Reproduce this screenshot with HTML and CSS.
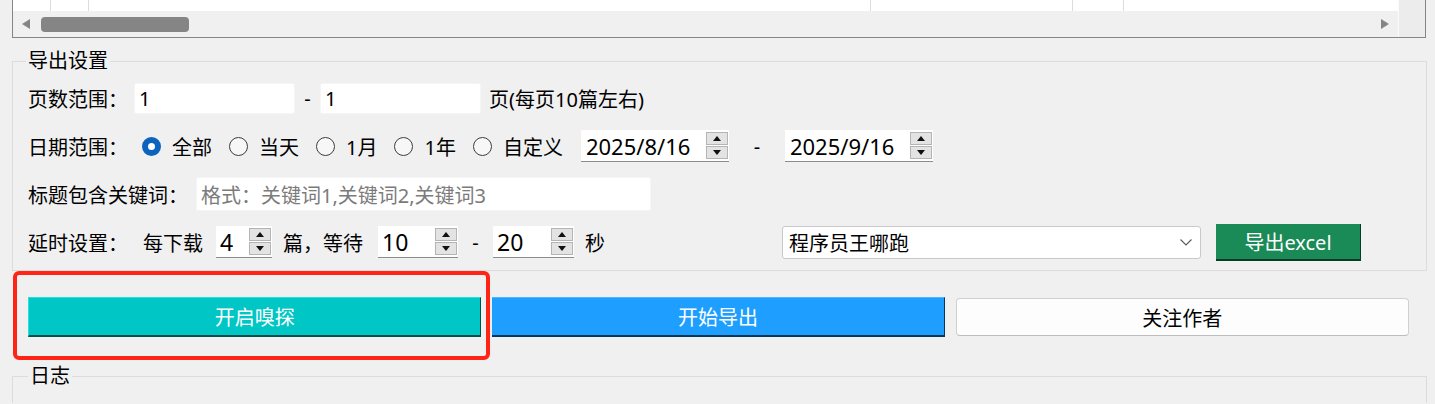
FILE: index.html
```html
<!DOCTYPE html>
<html lang="zh-CN">
<head>
<meta charset="utf-8">
<title>导出设置</title>
<link rel="stylesheet" href="styles.css">
</head>
<body>
<div class="grid-frame">
  <div class="grid-main">
    <div class="grid-row">
      <span class="cell c1"></span>
      <span class="cell c2"></span>
      <span class="cell c3"></span>
      <span class="cell c4"></span>
      <span class="cell c5"></span>
      <span class="cell c6"></span>
    </div>
    <div class="hscroll">
      <span class="arrow-left"></span>
      <span class="thumb"></span>
      <span class="arrow-right"></span>
    </div>
  </div>
  <div class="corner"></div>
</div>

<fieldset class="group export-group">
  <legend>导出设置</legend>
  <div class="row">
    <span class="label w-page">页数范围：</span>
    <div class="line-edit page-edit">1</div>
    <span class="dash dash-page">-</span>
    <div class="line-edit page-edit">1</div>
    <span class="after-page">页(每页10篇左右)</span>
  </div>
  <div class="row">
    <span class="label w-date">日期范围：</span>
    <label class="radio"><span class="dot checked"></span>全部</label>
    <label class="radio"><span class="dot"></span>当天</label>
    <label class="radio"><span class="dot"></span>1月</label>
    <label class="radio"><span class="dot"></span>1年</label>
    <label class="radio last"><span class="dot"></span>自定义</label>
    <div class="spin date-spin">
      <span class="spin-val date-val">2025/8/16</span>
      <span class="spin-btns"><span class="sb up"><i></i></span><span class="sb down"><i></i></span></span>
    </div>
    <span class="dash dash-date">-</span>
    <div class="spin date-spin">
      <span class="spin-val date-val">2025/9/16</span>
      <span class="spin-btns"><span class="sb up"><i></i></span><span class="sb down"><i></i></span></span>
    </div>
  </div>
  <div class="row">
    <span class="label w-key">标题包含关键词：</span>
    <div class="line-edit key-edit"><span class="placeholder">格式：关键词1,关键词2,关键词3</span></div>
  </div>
  <div class="row">
    <span class="label w-delay">延时设置：</span>
    <span class="txt">每下载</span>
    <div class="spin spin-n1">
      <span class="spin-val">4</span>
      <span class="spin-btns"><span class="sb up"><i></i></span><span class="sb down"><i></i></span></span>
    </div>
    <span class="txt t-wait">篇，等待</span>
    <div class="spin spin-n2">
      <span class="spin-val">10</span>
      <span class="spin-btns"><span class="sb up"><i></i></span><span class="sb down"><i></i></span></span>
    </div>
    <span class="dash dash-delay">-</span>
    <div class="spin spin-n3">
      <span class="spin-val">20</span>
      <span class="spin-btns"><span class="sb up"><i></i></span><span class="sb down"><i></i></span></span>
    </div>
    <span class="txt t-sec">秒</span>
    <div class="combo">
      <span class="combo-val">程序员王哪跑</span>
      <svg class="chev" width="12" height="7" viewBox="0 0 12 7"><polyline points="0.5,0.5 6,6 11.5,0.5" fill="none" stroke="#5a5a5a" stroke-width="1.1"/></svg>
    </div>
    <button class="btn btn-excel">导出excel</button>
  </div>
</fieldset>

<div class="actions">
  <span class="highlight"></span>
  <button class="btn btn-sniff">开启嗅探</button>
  <button class="btn btn-export">开始导出</button>
  <button class="btn btn-follow">关注作者</button>
</div>

<fieldset class="group log-group">
  <legend>日志</legend>
</fieldset>
</body>
</html>
```

FILE: styles.css
```css
html, body {
  margin: 0;
  padding: 0;
  overflow: hidden;
}

body {
  width: 1435px;
  height: 404px;
  background: #f0f0f0;
  font-family: "Noto Sans", "Noto Sans CJK SC", sans-serif;
  font-size: 20px;
  color: #000;
}

/* ---------- top table frame ---------- */
.grid-frame {
  margin-left: 12px;
  width: 1412px;
  height: 37px;
  border: 1px solid #83868d;
  border-top: none;
  display: flex;
}

.grid-main {
  width: 1385px;
  display: flex;
  flex-direction: column;
}

.grid-row {
  height: 11px;
  background: #fff;
  display: flex;
}

.cell {
  box-sizing: border-box;
  height: 100%;
  border-right: 1px solid #dcdcdc;
}
.c1 { width: 38px; }
.c2 { width: 38px; }
.c3 { width: 782px; }
.c4 { width: 202px; }
.c5 { width: 51px; }
.c6 { flex: 1; border-right: none; }

.hscroll {
  height: 26px;
  display: flex;
  align-items: center;
  background: #f0f0f0;
}

.arrow-left {
  margin-left: 9px;
  width: 0;
  height: 0;
  border-top: 5px solid transparent;
  border-bottom: 5px solid transparent;
  border-right: 8px solid #858585;
}

.thumb {
  margin-left: 11px;
  width: 148px;
  height: 15px;
  border-radius: 4px;
  background: #858585;
}

.arrow-right {
  margin-left: auto;
  margin-right: 9px;
  width: 0;
  height: 0;
  border-top: 5px solid transparent;
  border-bottom: 5px solid transparent;
  border-left: 8px solid #858585;
}

.corner {
  flex: 1;
  background: #ececec;
  border-left: 1px solid #fafafa;
}

/* ---------- group boxes ---------- */
.group {
  margin: 0 8px 0 12px;
  border: 1px solid #dcdcdc;
  min-width: 0;
}

.group legend {
  font-size: 20px;
  line-height: 24px;
  padding: 0 2px;
  margin-left: -2px;
}

.export-group {
  margin-top: 11px;
  padding: 1px 0 4px 15px;
}

.log-group {
  box-sizing: border-box;
  margin-top: 27px;
  padding: 0 0 0 17px;
  height: 39px;
  border-bottom: none;
}

.row {
  height: 48px;
  display: flex;
  align-items: center;
  white-space: nowrap;
}

.label { flex: none; }
.w-page { width: 106px; }
.w-date { width: 114px; }
.w-key { width: 168px; }
.w-delay { width: 115px; }

.line-edit {
  box-sizing: border-box;
  background: #fff;
  border: 1px solid #f5f5f5;
  border-radius: 2px;
  display: flex;
  align-items: center;
  padding-left: 4px;
}

.page-edit {
  width: 161px;
  height: 31px;
}

.key-edit {
  width: 455px;
  height: 34px;
}

.placeholder { color: #7b7b7b; }

.dash {
  display: flex;
  justify-content: center;
  flex: none;
}
.dash-page { width: 25px; }
.dash-date { width: 56px; }
.dash-delay { width: 35px; }

.after-page { margin-left: 8px; }

/* radios */
.radio {
  display: flex;
  align-items: center;
  margin-right: 17px;
}
.radio.last { margin-right: 18px; }

.dot {
  box-sizing: border-box;
  width: 19px;
  height: 19px;
  border-radius: 50%;
  border: 1px solid #3c3c3c;
  background: #f7f7f7;
  margin-right: 11px;
}
.dot.checked {
  border: 6px solid #0a64bd;
  background: #fff;
}

/* spin boxes */
.spin {
  box-sizing: border-box;
  height: 32px;
  background: #fff;
  border-bottom: 1px solid #8c8c8c;
  display: flex;
  align-items: center;
  flex: none;
}

.spin-val {
  flex: 1;
  font-size: 23px;
  padding-left: 4px;
}

.date-val {
  font-size: 22px;
  padding-left: 5px;
}

.spin-btns {
  width: 22px;
  align-self: stretch;
  margin: 2px 1px 2px 0;
  display: flex;
  flex-direction: column;
  gap: 1px;
}

.sb {
  flex: 1;
  background: #e3e3e3;
  border: 1px solid #b4b4b4;
  display: flex;
  align-items: center;
  justify-content: center;
}

.sb i {
  width: 0;
  height: 0;
  border-left: 4.5px solid transparent;
  border-right: 4.5px solid transparent;
}
.sb.up i { border-bottom: 5px solid #111; }
.sb.down i { border-top: 5px solid #111; }

.date-spin { width: 148px; }
.spin-n1 { width: 56px; margin-left: 13px; }
.spin-n2 { width: 80px; margin-left: 15px; }
.spin-n3 { width: 81px; }

.t-wait { margin-left: 11px; }
.t-sec { margin-left: 11px; }

/* combo */
.combo {
  box-sizing: border-box;
  margin-left: auto;
  width: 419px;
  height: 33px;
  background: #fff;
  border: 1px solid #c9c9c9;
  border-radius: 3px;
  display: flex;
  align-items: center;
  padding: 0 8px 0 6px;
}
.combo-val { flex: 1; }
.chev { display: block; }

/* buttons */
.btn {
  font-family: "Noto Sans", "Noto Sans CJK SC", sans-serif;
  font-size: 20px;
  box-sizing: border-box;
  padding: 0;
  cursor: pointer;
}

.btn-excel {
  margin-left: 15px;
  margin-right: 65px;
  width: 145px;
  height: 37px;
  background: #1a8a56;
  color: #fff;
  border: none;
  border-right: 1px solid #0d3a24;
  border-bottom: 2px solid #0d3a24;
}

.actions {
  position: relative;
  margin-top: 26px;
  padding: 0 26px 0 28px;
  display: flex;
  gap: 11px;
  height: 40px;
}

.actions .btn {
  flex: 1;
  height: 40px;
}

.btn-sniff {
  background: #00c7c5;
  color: #fff;
  border: none;
  border-top: 1px solid #20e2e0;
  border-left: 1px solid #20e2e0;
  border-right: 1px solid #0b4d4d;
  border-bottom: 2px solid #0b4d4d;
}

.btn-export {
  background: #1e9fff;
  color: #fff;
  border: none;
  border-top: 1px solid #4db4ff;
  border-right: 1px solid #0b3756;
  border-bottom: 2px solid #0b3756;
}

.btn-follow {
  margin: 1px 0;
  height: 38px !important;
  background: #fdfdfd;
  color: #000;
  border: 1px solid #d0d0d0;
  border-bottom-color: #bdbdbd;
  border-radius: 4px;
}

.highlight {
  position: absolute;
  left: 13px;
  top: -26px;
  width: 477px;
  height: 89px;
  box-sizing: border-box;
  border: 4px solid #ff2416;
  border-radius: 6px;
  pointer-events: none;
}
```
